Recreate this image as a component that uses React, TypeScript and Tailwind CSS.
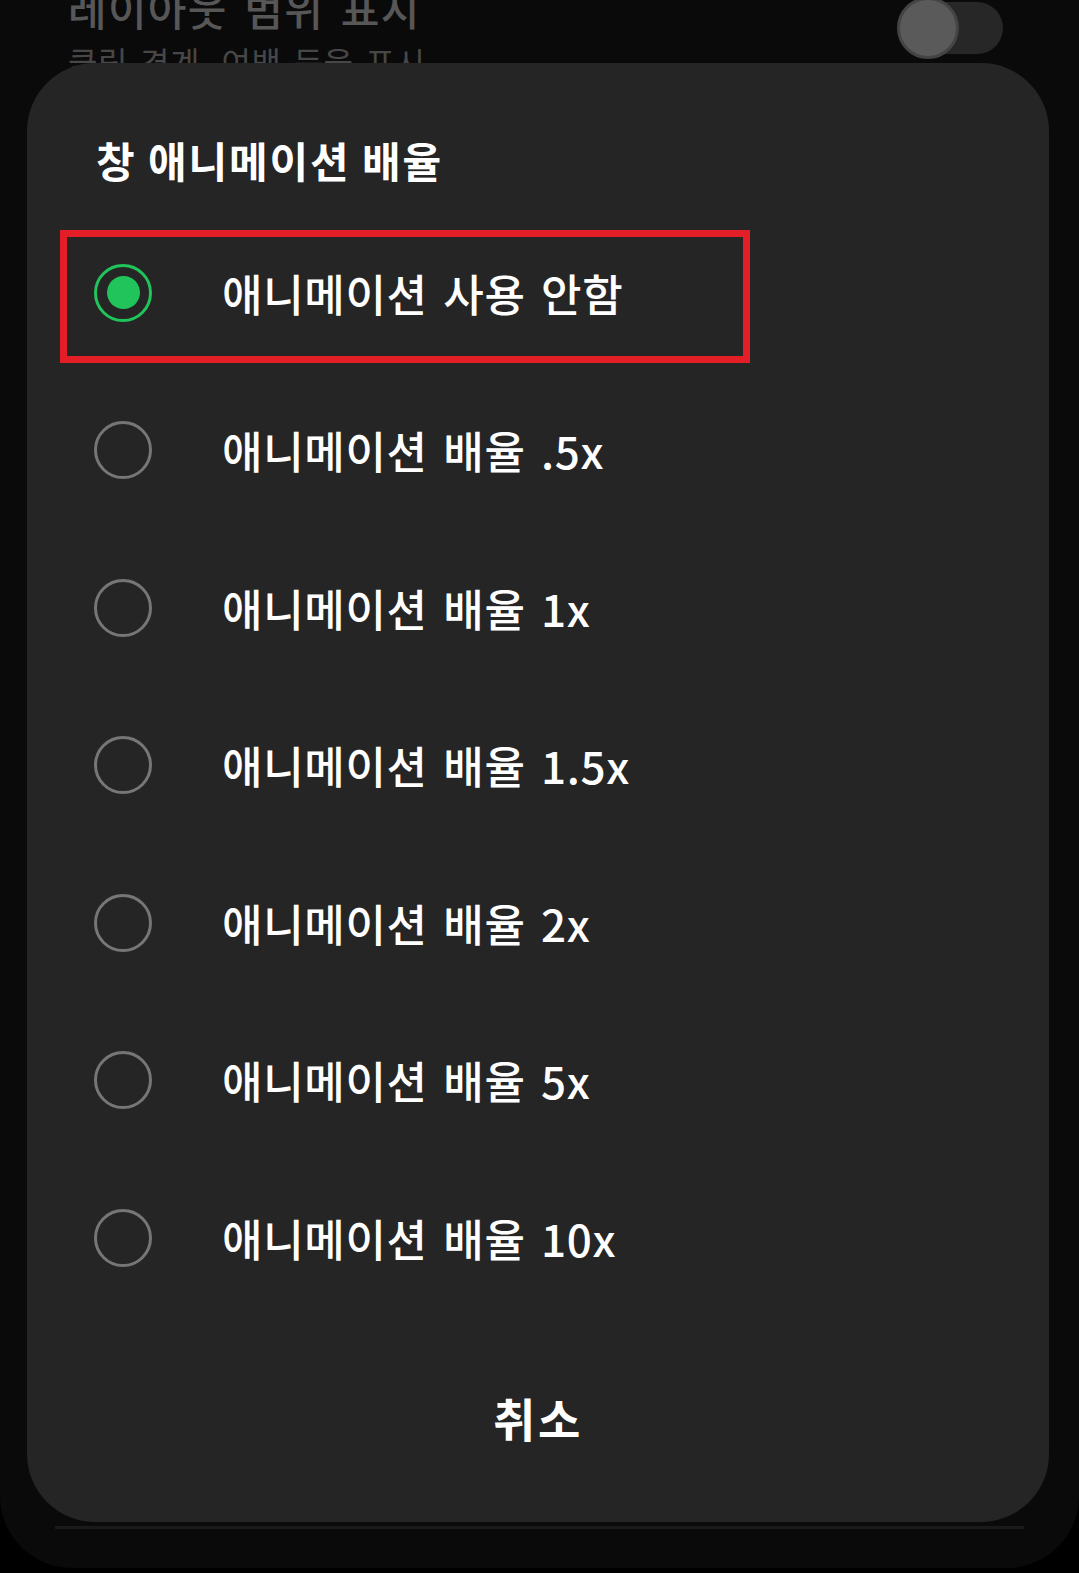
import React from 'react';

const options = [
  '애니메이션 사용 안함',
  '애니메이션 배율 .5x',
  '애니메이션 배율 1x',
  '애니메이션 배율 1.5x',
  '애니메이션 배율 2x',
  '애니메이션 배율 5x',
  '애니메이션 배율 10x',
];

const Radio: React.FC<{ checked: boolean }> = ({ checked }) =>
  checked ? (
    <div className="w-[58px] h-[58px] rounded-full border-[3px] border-[#20c45a] flex items-center justify-center shrink-0">
      <div className="w-[33px] h-[33px] rounded-full bg-[#20c45a]" />
    </div>
  ) : (
    <div className="w-[58px] h-[58px] rounded-full border-[3px] border-[#767676] shrink-0" />
  );

const App: React.FC = () => {
  return (
    <div
      className="bg-black w-[1079px] h-[1573px] overflow-hidden"
      style={{ fontFamily: '"Noto Sans CJK KR", "Noto Sans", sans-serif' }}
    >
      <div className="relative bg-[#0b0a0b] h-[1568px] rounded-b-[72px] flex flex-col">
        {/* Settings row behind the dialog */}
        <div className="flex items-start justify-between pl-[68px] pr-[76px] -mt-[15px]">
          <div className="flex flex-col">
            <span className="text-[42px] leading-[46px] font-medium tracking-[0.03em] [word-spacing:6px] text-[#575757]">레이아웃 범위 표시</span>
            <span className="text-[32px] leading-[40px] mt-[10px] tracking-[0.02em] [word-spacing:4px] text-[#474747]">클립 경계, 여백 등을 표시</span>
          </div>
          <div className="relative w-[104px] h-[52px] mt-[17px] rounded-full bg-[#272727]">
            <div className="absolute -left-[2px] -top-[5px] w-[62px] h-[62px] rounded-full bg-[#5a5a5a] border-[3px] border-[#444444]" />
          </div>
        </div>

        <div className="mt-auto mb-[39px] mx-[55px] h-[3px] bg-[#1b1a1b]" />

        {/* Dialog */}
        <div className="absolute left-[27px] top-[63px] w-[1022px] h-[1459px] bg-[#252525] rounded-[68px] flex flex-col">
          <div className="h-[151px] pl-[69px] pt-[71px]">
            <h2 className="text-[42px] leading-[52px] font-bold tracking-[0.045em] text-white">창 애니메이션 배율</h2>
          </div>

          <div className="flex flex-col">
            {options.map((label, i) => (
              <div key={i} className="relative h-[157.5px] flex items-center pl-[67px] gap-[70px]">
                <Radio checked={i === 0} />
                <span className="text-[44px] leading-none font-medium tracking-[0.015em] [word-spacing:5px] text-white">{label}</span>
                {i === 0 && (
                  <div className="absolute left-[33px] top-[16px] w-[690px] h-[133px] border-[7px] border-[#e41e26]" />
                )}
              </div>
            ))}
          </div>

          <div className="mt-[40px] h-[120px] flex items-center justify-center">
            <span className="text-[46px] leading-none font-bold tracking-[0.06em] text-white">취소</span>
          </div>
        </div>
      </div>
    </div>
  );
};

export default App;
